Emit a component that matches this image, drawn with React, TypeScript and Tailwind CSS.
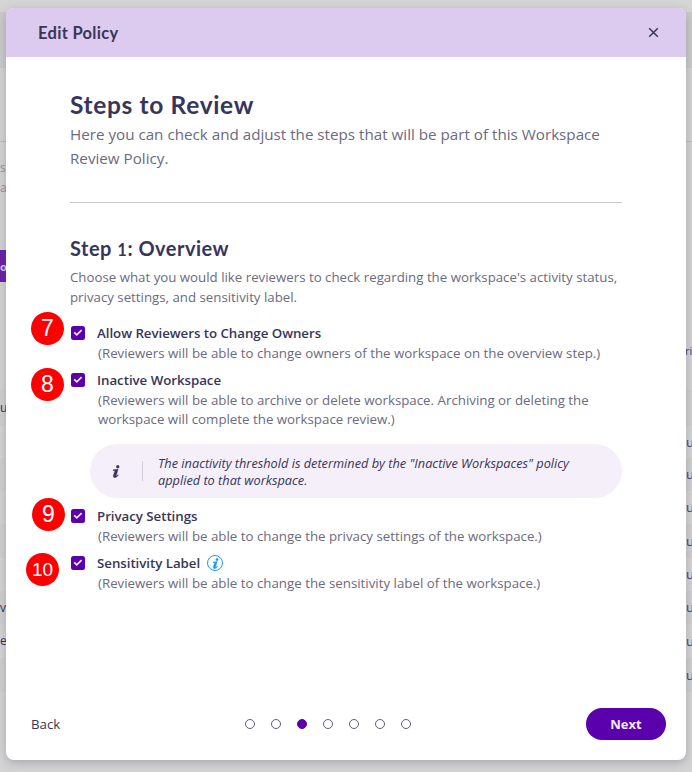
import type { ReactNode } from "react";

const bandRows = [
  { h: "h-3", bg: "bg-[#d5d5d5]" },
  { h: "h-14", bg: "bg-[#cacaca]" },
  { h: "h-[73px]", bg: "bg-[#d3d3d3]" },
  { h: "h-px", bg: "bg-[#bdbdbd]" },
  { h: "h-4", bg: "bg-[#d3d3d3]" },
  { h: "h-5", bg: "bg-[#d3d3d3]", left: "se", muted: true },
  { h: "h-5", bg: "bg-[#d3d3d3]", left: "a", muted: true },
  { h: "h-[52px]", bg: "bg-[#d3d3d3]" },
  { h: "h-8", bg: "bg-[#d3d3d3]", left: "o", button: true },
  { h: "h-[52px]", bg: "bg-[#d3d3d3]" },
  { h: "h-8", bg: "bg-[#d3d3d3]", right: "ri" },
  { h: "h-6", bg: "bg-[#d3d3d3]" },
  { h: "h-9", bg: "bg-[#cfcfcf]", left: "u" },
  { h: "h-8", bg: "bg-[#d4d4d4]", right: "u" },
  { h: "h-[33px]", bg: "bg-[#cfcfcf]", right: "u" },
  { h: "h-[33px]", bg: "bg-[#d4d4d4]", right: "u" },
  { h: "h-[34px]", bg: "bg-[#cfcfcf]", right: "u" },
  { h: "h-[33px]", bg: "bg-[#d4d4d4]", right: "u" },
  { h: "h-[33px]", bg: "bg-[#cfcfcf]", left: "v", right: "u" },
  { h: "h-[34px]", bg: "bg-[#d4d4d4]", left: "e", right: "u" },
  { h: "h-[34px]", bg: "bg-[#cfcfcf]", right: "u" },
  { h: "h-[79px]", bg: "bg-[#d4d4d4]" },
];

function Backdrop() {
  return (
    <div className="flex h-full flex-col">
      {bandRows.map((r, i) => (
        <div key={i} className={`flex shrink-0 items-center justify-between text-[13px] leading-none ${r.h} ${r.bg}`}>
          <span
            className={`flex h-full w-1.5 items-center whitespace-nowrap ${
              r.button
                ? "bg-[#6a22a8] text-[11px] font-bold text-[#d8c8e8]"
                : r.muted
                  ? "text-[12px] text-[#98919c]"
                  : "text-[12px] text-[#34306a]"
            }`}
          >
            {r.left}
          </span>
          <span className={`whitespace-nowrap text-[#3b3a86] ${r.right === "ri" ? "w-[7px] text-[11px]" : "w-[6px]"}`}>
            {r.right}
          </span>
        </div>
      ))}
    </div>
  );
}

function Check() {
  return (
    <span className="mt-[3px] flex size-3.5 shrink-0 items-center justify-center rounded-[2.5px] bg-[#5a00ad]">
      <svg viewBox="0 0 14 14" className="size-3.5" fill="none" stroke="#f3e9ff" strokeWidth="1.7">
        <path d="M3.2 6.4 5.8 8.9 10.6 4.2" />
      </svg>
    </span>
  );
}

function Option({ label, icon, children }: { label: string; icon?: ReactNode; children: ReactNode }) {
  return (
    <div className="flex gap-3 pl-px">
      <Check />
      <div className="text-[13.3px] leading-5 whitespace-nowrap">
        <div className="flex items-center font-semibold tracking-[-0.04px] text-[#38355a]">
          {label}
          {icon}
        </div>
        <div className="pl-px text-[#6c6a80]">{children}</div>
      </div>
    </div>
  );
}

function InfoGlyph({ className }: { className: string }) {
  return (
    <svg viewBox="0 0 8 14" className={className} fill="currentColor" stroke="currentColor" strokeWidth="0.5">
      <circle cx="5.9" cy="1.9" r="1.5" />
      <path d="M1 5.2 6.3 4.6 4.2 11.4Q4.1 12.1 4.6 11.8L6.1 10.5 6.6 11Q4.4 13.7 2.4 13.6 0.6 13.4 1.2 11.4L2.7 6.6Q2.9 5.9 2.2 5.9L0.9 5.9Z" />
    </svg>
  );
}

const badges = [
  { n: "7", pos: "left-[31px] top-[312px]", size: "text-[23px]" },
  { n: "8", pos: "left-[31px] top-[368px]", size: "text-[23px]" },
  { n: "9", pos: "left-[32px] top-[498px]", size: "text-[23px]" },
  { n: "10", pos: "left-[26px] top-[553px]", size: "text-[19px]" },
];

export default function App() {
  return (
    <div className="relative h-[772px] w-[692px] overflow-hidden bg-[#d3d3d3] font-['Open_Sans',sans-serif]">
      <Backdrop />

      <div className="absolute top-2 left-1.5 flex h-[752px] w-[680px] flex-col overflow-hidden rounded-lg bg-white shadow-[0_3px_10px_rgba(60,50,80,0.28)]">
        <header className="flex h-[49px] shrink-0 items-center justify-between bg-[#dccbef] pr-[27px] pl-8">
          <h1 className="pt-px font-['Lato'] text-[16.5px] font-bold tracking-[0.3px] text-[#38355a]">Edit Policy</h1>
          <svg viewBox="0 0 11 11" className="size-[11px]" fill="none" stroke="#38355a" strokeWidth="1.5">
            <path d="M1.2 1.2 9.8 9.8M9.8 1.2 1.2 9.8" />
          </svg>
        </header>

        <main className="flex-1 px-16 pt-[31px]">
          <h2 className="font-['Lato'] text-[24.5px] leading-[34px] font-bold tracking-[0.66px] text-[#38355a]">Steps to Review</h2>
          <p className="text-[15.2px] leading-6 whitespace-nowrap text-[#6c6a80]">
            Here you can check and adjust the steps that will be part of this Workspace
            <br />
            Review Policy.
          </p>
          <hr className="mt-8 border-[#c9c8cf]" />

          <h3 className="mt-[31px] font-['Lato'] text-[20px] leading-7 font-bold tracking-[0.5px] text-[#38355a]">
            Step <span className="text-[16.5px]">1</span>: Overview
          </h3>
          <p className="mt-[3px] text-[13.28px] leading-5 whitespace-nowrap text-[#6c6a80]">
            Choose what you would like reviewers to check regarding the workspace's activity status,
            <br />
            privacy settings, and sensitivity label.
          </p>

          <div className="mt-4 flex flex-col gap-[7px]">
            <Option label="Allow Reviewers to Change Owners">
              (Reviewers will be able to change owners of the workspace on the overview step.)
            </Option>
            <Option label="Inactive Workspace">
              (Reviewers will be able to archive or delete workspace. Archiving or deleting the
              <div className="-mt-px">workspace will complete the workspace review.)</div>
            </Option>
            <div className="mt-2 mb-px ml-5 flex h-[54px] items-center rounded-full bg-[#f5effa] text-[#38355a]">
              <InfoGlyph className="ml-[22px] h-[13px] w-[8px]" />
              <span className="ml-[22px] h-5 w-px bg-[#d2ccd9]" />
              <p className="ml-[15px] pt-0.5 text-[12.76px] leading-[17px] whitespace-nowrap italic">
                The inactivity threshold is determined by the "Inactive Workspaces" policy
                <br />
                applied to that workspace.
              </p>
            </div>
            <Option label="Privacy Settings">(Reviewers will be able to change the privacy settings of the workspace.)</Option>
            <Option
              label="Sensitivity Label"
              icon={
                <span className="ml-[7px] flex size-4 items-center justify-center rounded-full border border-[#1e9bf0] text-[#1e9bf0]">
                  <InfoGlyph className="h-[11px] w-[7px]" />
                </span>
              }
            >
              (Reviewers will be able to change the sensitivity label of the workspace.)
            </Option>
          </div>
        </main>

        <footer className="flex h-[72px] shrink-0 items-center pt-5 pr-5 pb-5 pl-[25px]">
          <button className="w-[214px] pt-0.5 text-left text-[13.28px] text-[#38355a]">Back</button>
          <div className="flex gap-4">
            {[0, 1, 2, 3, 4, 5, 6].map((i) => (
              <span
                key={i}
                className={`size-2.5 rounded-full border ${i === 2 ? "border-[#5a00ad] bg-[#5a00ad]" : "border-[#5f5c7a]"}`}
              />
            ))}
          </div>
          <button className="ml-auto h-8 w-20 rounded-full bg-[#5a00ad] pt-px text-[13px] font-bold text-[#f3e9ff]">Next</button>
        </footer>
      </div>

      {badges.map((b) => (
        <span
          key={b.n}
          className={`absolute flex size-[33px] items-center justify-center rounded-full bg-[#fe0000] font-['Liberation_Sans'] leading-none text-white ${b.pos} ${b.size}`}
        >
          {b.n}
        </span>
      ))}
    </div>
  );
}
